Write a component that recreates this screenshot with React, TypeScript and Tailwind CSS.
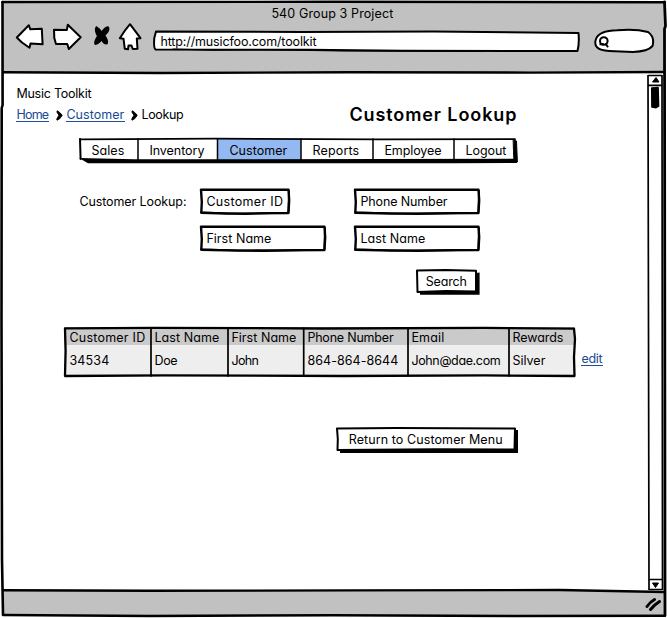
import { useLayoutEffect, useRef, type ReactNode } from "react";

/** Text tracked out so that it fills `w` pixels, less a hair of side bearing. */
function Fit({ w, children, className = "" }: { w: number; children: string; className?: string }) {
  const box = useRef<HTMLSpanElement>(null);
  const ink = useRef<HTMLSpanElement>(null);
  useLayoutEffect(() => {
    if (!box.current || !ink.current) return;
    ink.current.style.letterSpacing = "0px";
    const natural = ink.current.getBoundingClientRect().width;
    ink.current.style.letterSpacing = `${(w - 1 - natural) / children.length}px`;
    box.current.style.width = `${w}px`;
  }, [w, children]);
  return (
    <span ref={box} className={`block shrink-0 whitespace-nowrap pl-[0.4px] pt-px ${className}`}>
      <span ref={ink}>{children}</span>
    </span>
  );
}

/** Hand-drawn strokes laid over a box. */
function Ink({ w, h, children }: { w: number; h: number; children: ReactNode }) {
  return (
    <svg
      className="pointer-events-none absolute left-0 top-0 overflow-visible"
      width={w}
      height={h}
      viewBox={`0 0 ${w} ${h}`}
      fill="none"
      stroke="black"
      strokeWidth="2"
      strokeLinejoin="round"
      strokeLinecap="round"
    >
      {children}
    </svg>
  );
}

function Field({ label, w, text, className = "" }: { label: string; w: number; text: number; className?: string }) {
  return (
    <div className={`relative flex h-[27px] shrink-0 pl-[6px] pt-[5px] ${className}`}>
      <Ink w={w} h={27}>
        <path d={`M1 1.6 L${w * 0.4} 1.8 L${w - 1.5} 1.8 L${w - 0.8} 12 L${w - 1.5} 25 L${w * 0.6} 25.4 L${w * 0.3} 25.6 L1.3 24.8 L1.8 14 Z`} strokeWidth="2.4" />
        <path d={`M1 24.4 L${w * 0.5} 26 L${w - 2} 24.6 M${w - 1} 3 L${w - 1.7} 24`} strokeWidth="1.8" />
      </Ink>
      <Fit w={text}>{label}</Fit>
    </div>
  );
}

function Crumb({ children, w }: { children: string; w: number }) {
  return (
    <a className="block h-4 border-b border-[#1f4f97] leading-4 text-[#1a4a94]">
      <Fit w={w}>{children}</Fit>
    </a>
  );
}

function Chevron() {
  return (
    <svg width="7" height="11" viewBox="0 0 7 11" className="mt-[4px] shrink-0">
      <path d="M1.2 .8 L3.6 2.4 L6.2 5.2 L4 8.4 L1 10.2 L.8 9 L3 5.2 L1 2.2 Z" fill="black" stroke="black" strokeWidth="1" strokeLinejoin="round" />
    </svg>
  );
}

const nav = [
  { label: "Sales", text: 34, cell: "w-[59px] pl-[12px]" },
  { label: "Inventory", text: 56, cell: "w-[80px] pl-[11px]" },
  { label: "Customer", text: 59, cell: "w-[83px] pl-[11px] bg-[#94b9f2]" },
  { label: "Reports", text: 48, cell: "w-[72px] pl-[11px]" },
  { label: "Employee", text: 58, cell: "w-[81px] pl-[11px]" },
  { label: "Logout", text: 42, cell: "w-[60px] pl-[11px]" },
];

const columns = [
  { head: "Customer ID", hw: 77, value: "34534", vw: 41, cell: "w-[87px] pl-[5px]" },
  { head: "Last Name", hw: 66, value: "Doe", vw: 24, cell: "w-[77px] pl-[3px]" },
  { head: "First Name", hw: 66, value: "John", vw: 28, cell: "w-[76px] pl-[3px]" },
  { head: "Phone Number", hw: 87, value: "864-864-8644", vw: 92, cell: "w-[104px] pl-[3px]" },
  { head: "Email", hw: 34, value: "John@dae.com", vw: 90, cell: "w-[101px] pl-[3px]" },
  { head: "Rewards", hw: 52, value: "Silver", vw: 34, cell: "w-[66px] pl-[3px]" },
];

export default function App() {
  return (
    <div className="relative flex h-[618px] w-[667px] flex-col overflow-hidden bg-white px-[3px] pb-[3px] pt-[2px] font-['Inter','Liberation_Sans',sans-serif] text-[12.5px] leading-4 text-black [font-feature-settings:'cv11','calt'_0]">
      <header className="flex h-[70px] shrink-0 flex-col bg-[#c1c1c1]">
        <div className="flex h-[19px] pl-[268px] pt-[3px]">
          <Fit w={123}>540 Group 3 Project</Fit>
        </div>
        <div className="flex pl-[12px]">
          <svg width="138" height="34" viewBox="15 21 138 34" className="shrink-0" fill="white" stroke="black" strokeWidth="2" strokeLinejoin="round">
            <path d="M16.8 37.5 L28.8 25.2 L30.3 29.3 L41.8 28.7 L42.6 44.2 L30.5 43.4 L29.5 47.8 L22 42.5 Z" />
            <path d="M54 29.8 L66.8 30 L67.8 24.8 L80.7 37.2 L68.8 49 L67.3 44 L56 44 L54.3 38 Z" />
            <path d="M96.3 27 Q99.5 29 101.8 32.5 Q104.5 27.5 108 27 Q109.5 29 107.5 32 L104.5 35.5 Q108 40 107 43.5 Q104.5 44.5 101.5 39.5 Q98.5 43.8 95.2 44.2 Q94 42 97.8 36 Q94.5 30.5 96.3 27 Z" fill="black" strokeWidth="1.6" />
            <path d="M130 24.2 L140.5 38.2 L136.8 38.5 L137.5 48.8 L132.8 49 L131.5 45.5 L128.5 45.5 L128 49.3 L124.8 48.8 L123.5 38.7 L119.8 38.2 Q125 30 130 24.2 Z" />
          </svg>
          <div className="relative h-[34px] w-[427px] shrink-0 pl-[7px] pt-[12px]">
            <Ink w={427} h={34}>
              <path d="M3 10.5 L148 11 L280 10.4 L425.5 12 Q426.5 22 424.5 30 L250 29.8 L155 28.8 L2.5 28.4 Q.5 27 1.3 17 Z" fill="white" />
              <path d="M20 28 L60 29.2 L110 28.6 L190 30 L330 30.3" strokeWidth="1.2" />
            </Ink>
            <Fit w={157} className="relative">http://musicfoo.com/toolkit</Fit>
          </div>
          <svg width="62" height="27" viewBox="593 28 62 27" className="ml-[13px] mt-[7px]" fill="white" stroke="black" strokeWidth="2">
            <path d="M596 39 Q599 30.8 617 30.3 Q635 28.5 648 32 Q655 37 652.5 46 Q648 51.5 633 52 L609 51 Q592 50 596 39 Z" />
            <circle cx="603.8" cy="41" r="3.8" />
            <path d="M599.5 44.2 L604 44.2 M605.5 43.5 L608 47.3" />
          </svg>
        </div>
      </header>

      <div className="flex h-[519px] shrink-0">
        <main className="flex w-[644px] shrink-0 flex-col pt-[13px]">
          <div className="flex h-4 pl-[13px]">
            <Fit w={76}>Music Toolkit</Fit>
          </div>
          <div className="flex h-[21px] pl-[13px] pt-[5px]">
            <Crumb w={33}>Home</Crumb>
            <span className="w-[7px]" />
            <Chevron />
            <span className="w-[3px]" />
            <Crumb w={59}>Customer</Crumb>
            <span className="w-[6px]" />
            <Chevron />
            <span className="w-[3px]" />
            <Fit w={43}>Lookup</Fit>
            <h1 className="-mt-[4px] ml-[165px] text-[18px] font-semibold leading-[24px]">
              <Fit w={169}>Customer Lookup</Fit>
            </h1>
          </div>

          <nav className="relative ml-[76px] mt-[17px] flex h-[22px] w-[437px]">
            {nav.map((n) => (
              <a key={n.label} className={`flex pt-[3px] ${n.cell}`}>
                <Fit w={n.text}>{n.label}</Fit>
              </a>
            ))}
            <Ink w={437} h={24}>
              <path d="M.8 .3 L137 -.3 L300 .4 L436 .2" strokeWidth="1.8" />
              <path d="M1 0 L1.6 20" strokeWidth="2" />
              <path d="M0 19 L55 20.3 L437 19.8 L438 24 L375 24.3 L9 24.2 Z" fill="black" stroke="none" />
              <path d="M434.5 1 L437.5 2 L438.4 23 L435 23 L434.5 12 Z" fill="black" strokeWidth="1" />
              <path d="M59 0 V21 M138.5 0 V21 M222 0 V21 M294 0 V21 M375 0 V21" strokeWidth="1.5" />
            </Ink>
          </nav>

          <div className="ml-[75px] mt-[27px] flex">
            <div className="w-[122px] shrink-0 pl-[1px] pt-[5px]">
              <Fit w={108}>Customer Lookup:</Fit>
            </div>
            <div className="grid grid-cols-[154px_126px] gap-y-[10px]">
              <Field label="Customer ID" w={90} text={78} className="w-[90px]" />
              <Field label="Phone Number" w={126} text={88} className="w-[126px]" />
              <Field label="First Name" w={126} text={66} className="w-[126px]" />
              <Field label="Last Name" w={126} text={66} className="w-[126px]" />
            </div>
          </div>

          <button className="relative ml-[413px] mt-[17px] flex h-[26px] w-[64px] shrink-0 pl-[9px] pt-[4px]">
            <Ink w={64} h={26}>
              <path d="M4 22 L60 22 L60 4 L63.6 3.5 L63.6 25.7 L4 25.7 Z" fill="black" stroke="none" />
              <path d="M1 1.5 L30 1 L60 1.8 L60 22.5 L30 22 L1.5 23 Z" fill="white" />
            </Ink>
            <Fit w={42} className="relative">Search</Fit>
          </button>

          <div className="mt-[32px] flex h-[50px] shrink-0 pl-[61px]">
            <div className="relative flex w-[511px] shrink-0">
              {columns.map((c) => (
                <div key={c.head} className="flex flex-col bg-[#eeeeee]">
                  <div className={`flex h-[18px] bg-[#cacaca] pt-[2px] ${c.cell}`}>
                    <Fit w={c.hw}>{c.head}</Fit>
                  </div>
                  <div className={`flex pt-[7px] ${c.cell}`}>
                    <Fit w={c.vw}>{c.value}</Fit>
                  </div>
                </div>
              ))}
              <Ink w={511} h={50}>
                <path d="M1 1.4 L90 .8 L260 1.5 L420 .9 L510 1.7 L511 12 L510 30 L510.5 49 L420 48.4 L280 49 L100 48.4 L1 49 L1.6 24 Z" strokeWidth="2.3" />
                <path d="M87 1 V49 M164 1 V49 M239.7 1 V49 M344 1 V49 M445 1 V49" strokeWidth="1.7" />
              </Ink>
            </div>
            <a className="ml-[6px] mt-[23px] block h-[16px] border-b border-[#1f4f97] leading-4 text-[#1a4a94]">
              <Fit w={22}>edit</Fit>
            </a>
          </div>

          <button className="relative ml-[333px] mt-[50px] flex h-[26px] w-[182px] shrink-0 pl-[12px] pt-[4px]">
            <Ink w={182} h={26}>
              <path d="M4 22 L178 22 L178 3 L182 3 L182 26 L4 26 Z" fill="black" stroke="none" />
              <path d="M1 1.4 L60 1 L179 1.6 L178.5 22.4 L100 22.2 L1.5 23 L1.8 12 Z" fill="white" />
            </Ink>
            <Fit w={155} className="relative">Return to Customer Menu</Fit>
          </button>
        </main>

        <aside className="w-[17px] shrink-0">
          <svg width="17" height="519" viewBox="647 72 17 519" fill="none" stroke="black" strokeWidth="1.7" strokeLinejoin="round">
            <path d="M648 75 L648.5 330 L649 590 M662 75 L662.5 590" />
            <path d="M648 75.5 H662 M648 85.3 H662" />
            <path d="M652.5 82 L656 77.5 L659 82 Z" fill="black" strokeWidth="1" />
            <path d="M651.8 88 L658 87.5 L658.5 106 L656 107.6 L652 107 Z" fill="black" />
            <path d="M649 579.5 H662.5 M649 589.5 H662" />
            <path d="M652.5 583 H658.5 L655.5 587.5 Z" fill="black" strokeWidth="1" />
          </svg>
        </aside>
      </div>

      <footer className="flex h-[24px] shrink-0 justify-end bg-[#c1c1c1]">
        <svg width="20" height="20" viewBox="644 595 20 20" className="mt-[3px]" stroke="black" strokeWidth="3" strokeLinecap="round">
          <path d="M647 607.5 Q650 603 654.5 600.5 M650.5 610.5 Q654 606 659.5 602.5" fill="none" />
        </svg>
      </footer>

      <Ink w={667} h={618}>
        <path d="M2.5 2 L330 1.8 L665 2.2" strokeWidth="2.4" />
        <path d="M2.5 2 L2.6 105 L1.7 108 L1.5 320 L2 560 L3 614.5" strokeWidth="2.6" />
        <path d="M664.5 2 L665.5 26 L664.5 29 L664.8 330 L665 615" strokeWidth="2.8" />
        <path d="M3 615 L150 616 L333 615.2 L520 616 L665 615.8" strokeWidth="2.6" />
        <path d="M3 72.2 L160 73 L350 72.3 L530 72.6 L664 72" strokeWidth="2.4" />
        <path d="M3 590.3 L150 590.8 L350 590.4 L560 590 L664 592" strokeWidth="2.4" />
      </Ink>
    </div>
  );
}
